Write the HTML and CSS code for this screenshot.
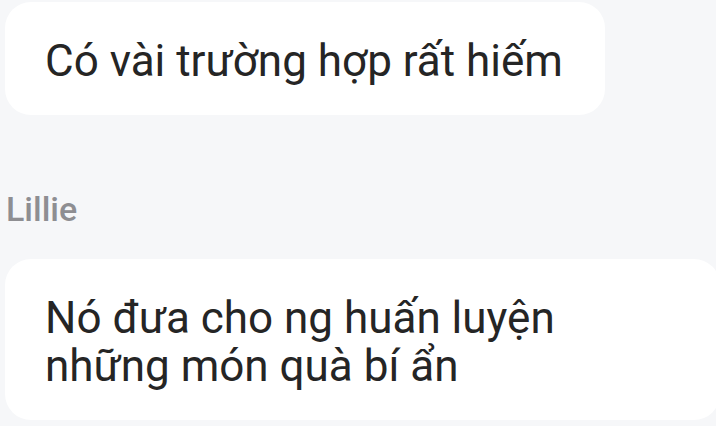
FILE: index.html
```html
<!DOCTYPE html>
<html lang="vi">
<head>
    <meta charset="UTF-8">
    <meta name="viewport" content="width=device-width, initial-scale=1.0">
    <title>Chat</title>
    <link rel="stylesheet" href="styles.css">
</head>
<body>
    <div class="chat">
        <!-- Previous message -->
        <div class="message">Có vài trường hợp rất hiếm</div>

        <!-- Sender name -->
        <div class="sender">Lillie</div>
        <div class="message wide">Nó đưa cho ng huấn luyện những món quà bí ẩn</div>
    </div>
</body>
</html>
```

FILE: styles.css
```css
html, body {
    margin: 0;
    padding: 0;
    background-color: #f6f7f9;
    overflow: hidden;
}

body {
    font-family: 'Roboto', 'Liberation Sans', sans-serif;
    color: #252525;
}

.chat {
    display: flex;
    flex-direction: column;
    align-items: flex-start;
    padding: 2px 0 0 5px;
}

.message {
    background-color: #fff;
    border-radius: 26px;
    padding: 35px 42px 30px 40px;
    font-size: 44px;
    line-height: 48px;
}

/* long message runs past the right edge */
.message.wide {
    width: 633px;
    flex-shrink: 0;
}

.sender {
    margin: 74px 0 30px 1px;
    font-size: 34px;
    line-height: 40px;
    font-weight: 500;
    color: #8e8e92;
}
```
